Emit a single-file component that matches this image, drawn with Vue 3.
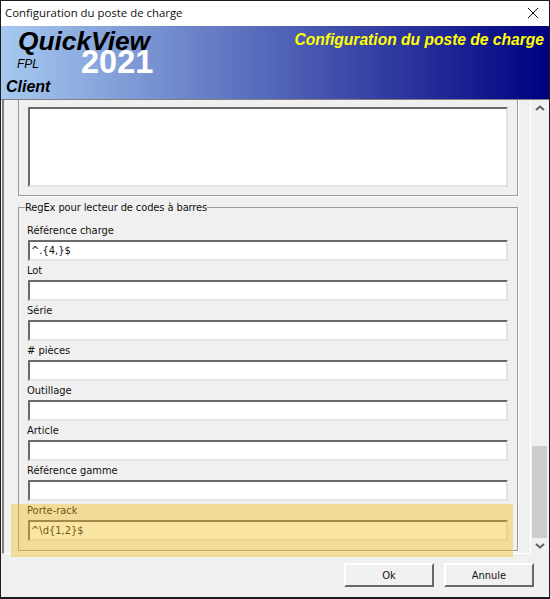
<script setup>
const fields = [
  { label: 'Référence charge', value: '^.{4,}$' },
  { label: 'Lot', value: '' },
  { label: 'Série', value: '' },
  { label: '# pièces', value: '' },
  { label: 'Outillage', value: '' },
  { label: 'Article', value: '' },
  { label: 'Référence gamme', value: '' },
  { label: 'Porte-rack', value: '^\\d{1,2}$' },
]
</script>

<template>
  <div class="window">
    <header class="titlebar">
      <span class="title">Configuration du poste de charge</span>
      <svg class="close" width="12" height="12" viewBox="0 0 12 12">
        <path d="M1 1 L11 11 M11 1 L1 11" stroke="#111" stroke-width="1" fill="none" />
      </svg>
    </header>

    <div class="banner">
      <span class="brand">QuickView</span>
      <span class="fpl">FPL</span>
      <span class="year">2021</span>
      <span class="client">Client</span>
      <span class="heading">Configuration du poste de charge</span>
    </div>

    <div class="panel">
      <div class="viewport">
        <div class="content">
          <fieldset class="group first">
            <legend>Texte de confirmation de chargement</legend>
            <div class="memo"></div>
          </fieldset>
          <fieldset class="group second">
            <legend>RegEx pour lecteur de codes à barres</legend>
            <div v-for="f in fields" :key="f.label" class="field">
              <div class="label">{{ f.label }}</div>
              <div class="input">{{ f.value }}</div>
            </div>
          </fieldset>
        </div>
      </div>
      <div class="scrollbar">
        <svg width="10" height="6" viewBox="0 0 10 6"><path d="M1 5 L5 1.5 L9 5" stroke="#606060" stroke-width="2" fill="none" /></svg>
        <div class="track"><div class="thumb"></div></div>
        <svg width="10" height="6" viewBox="0 0 10 6"><path d="M1 1 L5 4.5 L9 1" stroke="#606060" stroke-width="2" fill="none" /></svg>
      </div>
    </div>

    <footer class="footer">
      <button class="btn">Ok</button>
      <button class="btn">Annule</button>
    </footer>

    <div class="highlight"></div>
  </div>
</template>

<style scoped>
.window {
  position: relative;
  box-sizing: border-box;
  width: 550px;
  height: 599px;
  border: 1px solid #1c1c1c;
  border-bottom-width: 2px;
  background: #f0f0f0;
  display: flex;
  flex-direction: column;
  overflow: hidden;
  font-family: "DejaVu Sans", sans-serif;
  font-stretch: condensed;
  font-size: 11px;
  color: #111;
}
.titlebar {
  height: 25px;
  flex: none;
  background: #fff;
  display: flex;
  align-items: center;
  justify-content: space-between;
  padding: 0 10px 2px 4px;
  box-sizing: border-box;
}
.title {
  font-family: "Open Sans", sans-serif;
  font-stretch: normal;
  font-size: 11.4px;
  color: #111;
}
.banner {
  position: relative;
  height: 73px;
  flex: none;
  background: linear-gradient(90deg, #a6caf0 0%, #000080 100%);
  font-family: "Liberation Sans", Arial, sans-serif;
  font-stretch: normal;
  font-style: italic;
  font-weight: 700;
}
.brand { position: absolute; left: 17px; top: -1px; font-size: 26.3px; color: #000; line-height: 32px; }
.fpl { position: absolute; left: 16px; top: 31px; font-size: 12px; font-weight: 400; color: #000; }
.year { position: absolute; left: 80px; top: 16px; font-size: 32.5px; font-style: normal; color: #fff; line-height: 40px; }
.client { position: absolute; left: 5px; top: 52px; font-size: 16px; color: #000; }
.heading { position: absolute; right: 5px; top: 5px; font-size: 15.6px; color: #ffff00; }
.panel {
  flex: none;
  height: 454px;
  display: flex;
  border-top: 1px solid #808080;
}
.viewport {
  flex: 1;
  overflow: hidden;
  border-left: 2px solid #808080;
  border-bottom: 1px solid #fff;
  margin-left: 1px;
}
.content {
  margin-top: -16px;
  padding: 0 12px 0 14px;
}
.group {
  margin: 0;
  padding: 0 9px;
  border: 1px solid #999;
  box-shadow: 1px 1px 0 #fff;
}
.group legend {
  padding: 0;
  margin-left: -3px;
  line-height: 13px;
  letter-spacing: -0.1px;
}
.first { height: 110px; margin-bottom: 5px; }
.memo {
  box-sizing: border-box;
  height: 80px;
  background: #fff;
  border: 2px solid #e3e3e3;
  border-top-color: #696969;
  border-left-color: #696969;
  margin-top: 10px;
}
.second { height: 348px; }
.field { height: 40px; box-sizing: border-box; padding-top: 10px; }
.label { height: 13px; line-height: 13px; margin-left: -1px; }
.input {
  box-sizing: border-box;
  height: 21px;
  margin-top: 3px;
  background: #fff;
  border: 2px solid #e3e3e3;
  border-top-color: #696969;
  border-left-color: #696969;
  line-height: 17px;
  padding-left: 1px;
}
.scrollbar {
  flex: none;
  width: 18px;
  margin-right: 1px;
  border-left: 1px solid #fff;
  display: flex;
  flex-direction: column;
  align-items: center;
  padding-top: 5px;
  padding-bottom: 5px;
  box-sizing: border-box;
  gap: 5px;
}
.track {
  flex: 1;
  width: 15px;
  display: flex;
  align-items: flex-end;
}
.thumb { width: 100%; height: 92px; background: #cdcdcd; }
.footer {
  flex: 1;
  display: flex;
  justify-content: flex-end;
  gap: 10px;
  padding: 9px 15px 0 0;
}
.btn {
  box-sizing: border-box;
  width: 90px;
  height: 24px;
  background: #f0f0f0;
  border: 2px solid #fff;
  border-right-color: #696969;
  border-bottom-color: #696969;
  font: inherit;
  color: #111;
  padding: 0;
}
.highlight {
  position: absolute;
  left: 10px;
  top: 503px;
  width: 502px;
  height: 53px;
  background: rgba(240, 187, 20, 0.4);
}
</style>
